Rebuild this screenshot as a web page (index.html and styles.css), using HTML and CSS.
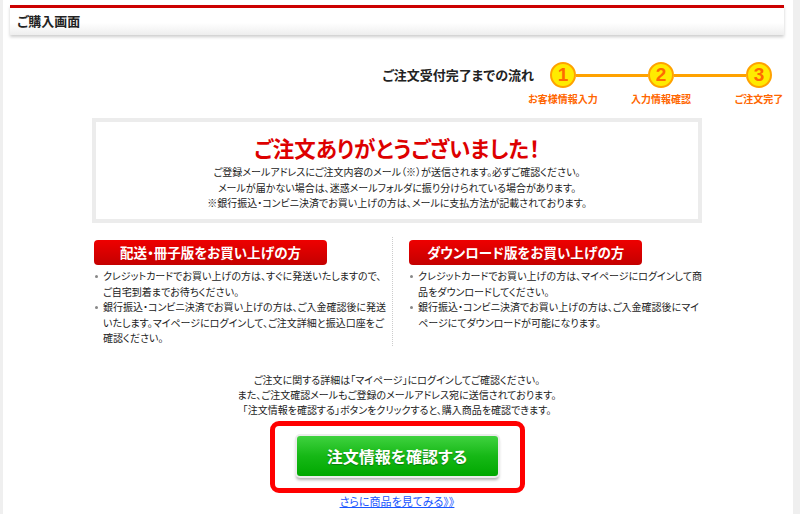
FILE: index.html
```html
<!DOCTYPE html>
<html lang="ja">
<head>
  <meta charset="UTF-8" />
  <meta name="viewport" content="width=device-width, initial-scale=1.0" />
  <title>ご購入画面</title>
  <link rel="stylesheet" href="styles.css">
</head>
<body>
  <div class="page">
    <!-- Header -->
    <div class="header">
      <h1>ご購入画面</h1>
    </div>

    <!-- Flow -->
    <div class="flow">
      <p class="flow-title">ご注文受付完了までの流れ</p>
      <ol class="steps">
        <li class="step"><span class="num">1</span><span class="label">お客様情報入力</span></li>
        <li class="bar"></li>
        <li class="step"><span class="num">2</span><span class="label">入力情報確認</span></li>
        <li class="bar"></li>
        <li class="step"><span class="num">3</span><span class="label">ご注文完了</span></li>
      </ol>
    </div>

    <!-- Thanks -->
    <div class="thanks">
      <h2>ご注文ありがとうございました！</h2>
      <p>ご登録メールアドレスにご注文内容のメール（※）が送信されます。必ずご確認ください。<br>
        メールが届かない場合は、迷惑メールフォルダに振り分けられている場合があります。<br>
        ※銀行振込・コンビニ決済でお買い上げの方は、メールに支払方法が記載されております。</p>
    </div>

    <!-- Guide -->
    <div class="guide">
      <div class="col col-left">
        <h3>配送・冊子版をお買い上げの方</h3>
        <ul>
          <li>クレジットカードでお買い上げの方は、すぐに発送いたしますので、<br>ご自宅到着までお待ちください。</li>
          <li>銀行振込・コンビニ決済でお買い上げの方は、ご入金確認後に発送<br>いたします。マイページにログインして、ご注文詳細と振込口座をご<br>確認ください。</li>
        </ul>
      </div>
      <div class="col col-right">
        <h3>ダウンロード版をお買い上げの方</h3>
        <ul>
          <li>クレジットカードでお買い上げの方は、マイページにログインして商<br>品をダウンロードしてください。</li>
          <li>銀行振込・コンビニ決済でお買い上げの方は、ご入金確認後にマイ<br>ページにてダウンロードが可能になります。</li>
        </ul>
      </div>
    </div>

    <p class="note">ご注文に関する詳細は「マイページ」にログインしてご確認ください。<br>
      また、ご注文確認メールもご登録のメールアドレス宛に送信されております。<br>
      「注文情報を確認する」ボタンをクリックすると、購入商品を確認できます。</p>

    <div class="cta">
      <a class="btn" href="#">注文情報を確認する</a>
    </div>

    <p class="more"><a href="#">さらに商品を見てみる》》</a></p>
  </div>
</body>
</html>
```

FILE: styles.css
```css
* {
  margin: 0;
  padding: 0;
  box-sizing: border-box;
}

body {
  font-family: "Noto Sans CJK JP", "Liberation Sans", sans-serif;
  font-feature-settings: "palt";
  color: #222;
  background: #fff;
  overflow: hidden;
}

.page {
  width: 800px;
  height: 514px;
  border-left: 3px solid #efefef;
  border-right: 7px solid #efefef;
  padding: 5px 9px 0 7px;
}

/* Header */
.header {
  height: 30px;
  border-top: 3px solid #cc0000;
  background: linear-gradient(#fff 55%, #eeeeee);
  box-shadow: 0 2px 3px rgba(0, 0, 0, 0.2);
}

.header h1 {
  font-size: 13px;
  line-height: 26px;
  padding-left: 7px;
  color: #222;
}

/* Flow */
.flow {
  display: flex;
  justify-content: flex-end;
  align-items: flex-start;
  margin-top: 27px;
  padding-right: 12px;
}

.flow-title {
  font-size: 13px;
  font-weight: bold;
  line-height: 26px;
  color: #222;
  margin-right: 16px;
}

.steps {
  display: flex;
  list-style: none;
}

.step {
  width: 26px;
}

.num {
  display: block;
  width: 26px;
  height: 26px;
  border: 2px solid #ffa200;
  border-radius: 50%;
  background: #ffeb00;
  color: #ff6a00;
  font-family: "Liberation Sans", sans-serif;
  font-size: 19px;
  font-weight: bold;
  line-height: 22px;
  text-align: center;
}

.label {
  display: block;
  margin: 5px -40px 0;
  font-size: 10px;
  font-weight: bold;
  line-height: 12px;
  color: #ff6600;
  text-align: center;
  white-space: nowrap;
}

.bar {
  width: 72px;
  height: 3px;
  margin-top: 11.5px;
  background: #ffa200;
}

/* Thanks box */
.thanks {
  width: 610px;
  height: 105px;
  margin: 13px auto 0;
  border: 4px solid #ececec;
  padding-top: 13px;
  text-align: center;
}

.thanks h2 {
  font-size: 21.5px;
  line-height: 26px;
  color: #dd0000;
  margin-bottom: 3px;
}

.thanks p {
  font-size: 10px;
  line-height: 15.5px;
}

/* Guide */
.guide {
  display: flex;
  width: 610px;
  margin: 14px auto 0;
}

.col {
  padding-top: 3px;
}

.col-left {
  width: 302px;
  border-right: 1px dotted #ccc;
}

.col-right {
  padding-left: 14px;
}

.col h3 {
  width: 233px;
  height: 25px;
  margin-left: 2px;
  border-radius: 4px;
  background: linear-gradient(#ee0000, #c40000);
  color: #fff;
  font-size: 13.5px;
  line-height: 25px;
  text-align: center;
}

.col ul {
  list-style: none;
  margin-top: 3px;
}

.col li {
  padding-left: 11px;
  font-size: 10px;
  line-height: 15.5px;
  white-space: nowrap;
}

.col li::before {
  content: "";
  display: inline-block;
  width: 3px;
  height: 3px;
  border-radius: 50%;
  background: #888;
  margin: 0 5px 2px -8px;
  vertical-align: middle;
}

/* Bottom */
.note {
  margin-top: 26px;
  font-size: 10px;
  line-height: 15px;
  text-align: center;
}

.cta {
  display: flex;
  justify-content: center;
  width: 255px;
  height: 72px;
  margin: 4px auto 0;
  padding-top: 10px;
  border: 5px solid #ff0000;
  border-radius: 9px;
}

.btn {
  display: block;
  width: 201px;
  height: 40px;
  border-radius: 3px;
  background: linear-gradient(#3fd23f, #16b816 50%, #00a800);
  box-shadow: 0 0 0 2px #ececec, 0 3px 3px 1px rgba(0, 0, 0, 0.3);
  color: #fff;
  font-size: 16px;
  font-weight: bold;
  line-height: 40px;
  text-align: center;
  text-decoration: none;
  text-shadow: 0 1px 1px rgba(0, 0, 0, 0.3);
}

.more {
  margin-top: 1px;
  font-size: 11px;
  line-height: 14px;
  text-align: center;
}

.more a {
  color: #1a56ff;
}
```
